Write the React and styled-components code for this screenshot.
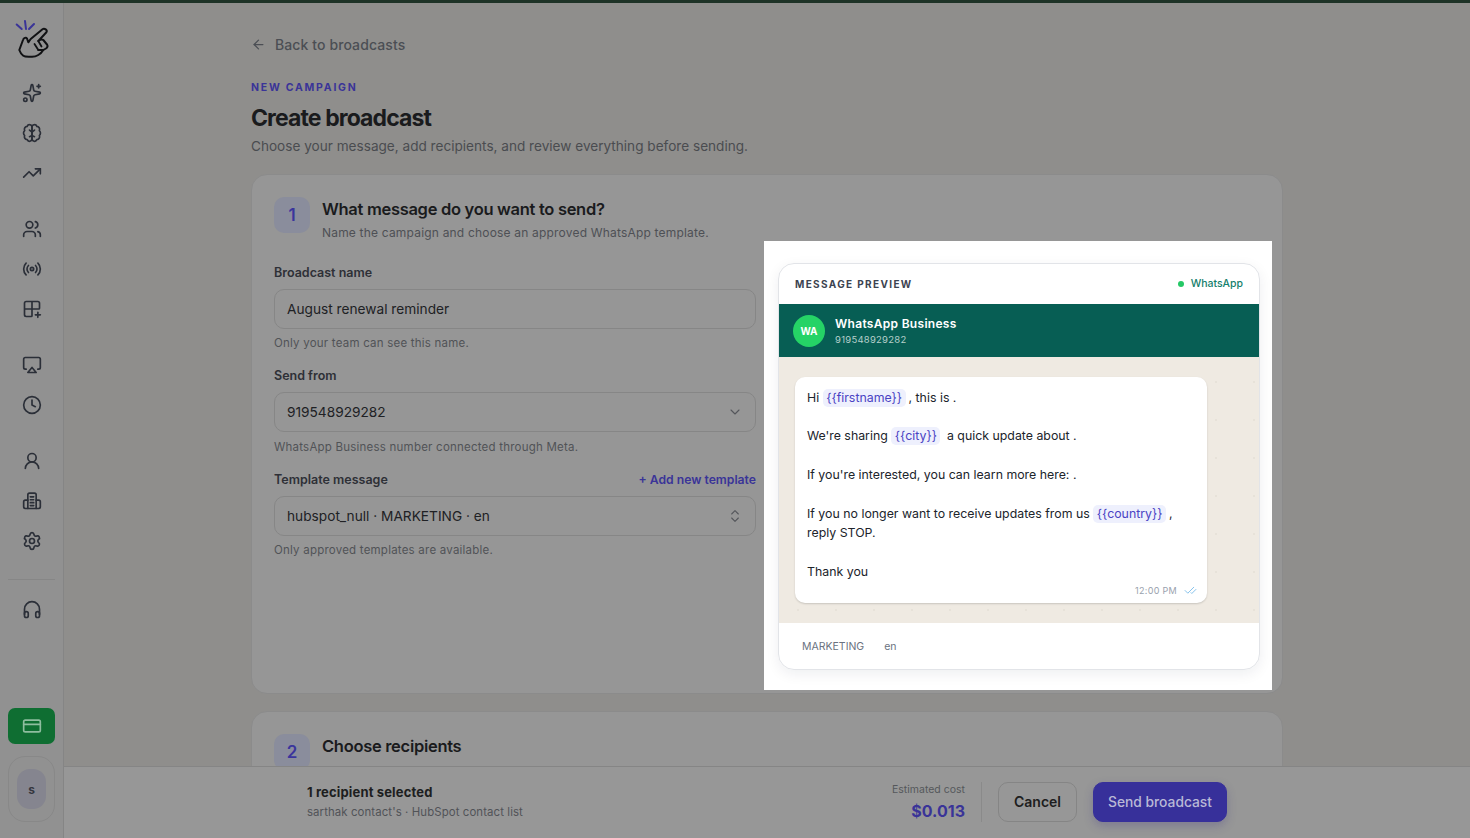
import React from 'react';
import styled, { createGlobalStyle } from 'styled-components';
import {
  Sparkles, TrendingUp, Users, Radio, Grid2x2Plus, Airplay, Clock, UserRound,
  Settings, CreditCard, ArrowLeft, ChevronDown, ChevronsUpDown, CheckCheck,
} from 'lucide-react';

const GlobalStyle = createGlobalStyle`
  html, body { margin: 0; padding: 0; height: 100%; background: #8f8e8c; }
  * { box-sizing: border-box; }
  body { font-family: Inter, "Noto Sans", sans-serif; color: #1d1e20; overflow: hidden; }
`;

const Shell = styled.div`
  display: flex;
  height: 838px;
  border-top: 3px solid #1e3327;
  position: relative;
  overflow: hidden;
`;

const Sidebar = styled.aside`
  width: 64px;
  flex-shrink: 0;
  background: #919191;
  border-right: 1px solid #858585;
  display: flex;
  flex-direction: column;
  align-items: center;
`;

const LogoWrap = styled.div`
  height: 70px;
  display: flex;
  align-items: center;
  justify-content: center;
  color: #17181a;
`;

const NavGroup = styled.div`
  display: flex;
  flex-direction: column;
  margin-bottom: 16px;
`;

const NavItem = styled.div`
  width: 40px;
  height: 40px;
  display: flex;
  align-items: center;
  justify-content: center;
  color: #2b2f38;
`;

const NavDivider = styled.div`
  width: 47px;
  height: 1px;
  background: #868686;
  margin: 2px 0 10px;
`;

const BillingButton = styled.div`
  margin-top: auto;
  width: 47px;
  height: 36px;
  border-radius: 7px;
  background: #0f6e32;
  color: #8fbd9f;
  display: flex;
  align-items: center;
  justify-content: center;
`;

const AvatarBox = styled.div`
  width: 47px;
  height: 66px;
  margin: 12px 0 16px;
  border: 1px solid #888888;
  border-radius: 17px;
  display: flex;
  align-items: center;
  justify-content: center;
`;

const Avatar = styled.div`
  width: 29px;
  height: 40px;
  border-radius: 13px;
  background: #85858f;
  color: #35373f;
  font-size: 12px;
  font-weight: 700;
  display: flex;
  align-items: center;
  justify-content: center;
`;

const Main = styled.main`
  flex: 1;
  padding-top: 32px;
  display: flex;
  flex-direction: column;
  align-items: center;
  overflow: hidden;
`;

const Column = styled.div`
  width: 1032px;
  flex-shrink: 0;
`;

const BackLink = styled.div`
  display: flex;
  align-items: center;
  gap: 9px;
  height: 18px;
  font-size: 14px;
  font-weight: 500;
  color: #4b4e54;
  margin-bottom: 28px;
  letter-spacing: 0.1px;
`;

const Eyebrow = styled.div`
  font-size: 10.5px;
  font-weight: 700;
  letter-spacing: 1.75px;
  color: #3a3498;
  line-height: 14px;
  margin-bottom: 7px;
`;

const PageTitle = styled.h1`
  margin: 0;
  font-size: 23px;
  line-height: 32px;
  font-weight: 700;
  letter-spacing: -0.9px;
  color: #1a1b1d;
`;

const PageSub = styled.p`
  margin: 2px 0 18px;
  font-size: 13.6px;
  line-height: 20px;
  color: #4a4c50;
`;

const Card = styled.section`
  position: relative;
  background: #969696;
  border: 1px solid #8b8b8b;
  border-radius: 16px;
  padding: 22px 22px;
  height: ${p => p.$height}px;
  margin-bottom: 17px;
`;

const StepHead = styled.div`
  display: flex;
  gap: 12px;
  margin-bottom: 21px;
`;

const StepBadge = styled.div`
  width: 36px;
  height: 36px;
  border-radius: 10px;
  background: #8a8d9c;
  color: #3a359c;
  font-size: 17px;
  font-weight: 600;
  display: flex;
  align-items: center;
  justify-content: center;
`;

const StepTitle = styled.h2`
  margin: -1px 0 0;
  font-size: 16.5px;
  line-height: 26px;
  font-weight: 600;
  letter-spacing: -0.3px;
  color: #1a1b1d;
`;

const StepSub = styled.p`
  margin: 2px 0 0;
  font-size: 12px;
  line-height: 18px;
  letter-spacing: 0.19px;
  color: #4e5055;
`;

const Form = styled.div`
  width: 482px;
`;

const Field = styled.div`
  margin-bottom: 15.5px;
`;

const LabelRow = styled.div`
  display: flex;
  justify-content: space-between;
  align-items: center;
  height: 18px;
  margin-bottom: 7.5px;
`;

const Label = styled.span`
  font-size: 12.5px;
  font-weight: 600;
  color: #2e3036;
`;

const AddLink = styled.span`
  font-size: 12.2px;
  font-weight: 600;
  color: #3a3498;
`;

const Control = styled.div`
  height: 40px;
  border: 1px solid #868686;
  border-radius: 10px;
  padding: 0 12px;
  display: flex;
  align-items: center;
  justify-content: space-between;
  font-size: 13.7px;
  color: #202124;
  svg { color: #54565b; }
`;

const Hint = styled.div`
  margin-top: 6.5px;
  font-size: 11.5px;
  line-height: 16px;
  letter-spacing: 0.22px;
  color: #515357;
`;

const Spotlight = styled.div`
  position: absolute;
  left: 512px;
  top: 66px;
  width: 508px;
  height: 449px;
  background: #fff;
  padding: 22px 12px 20px 14px;
`;

const PreviewCard = styled.div`
  height: 100%;
  border: 1px solid #e2e4e8;
  border-radius: 16px;
  overflow: hidden;
  display: flex;
  flex-direction: column;
  box-shadow: 0 4px 14px rgba(20, 30, 50, 0.07);
`;

const PreviewTop = styled.div`
  height: 40px;
  flex-shrink: 0;
  padding: 0 16px 1px;
  display: flex;
  align-items: center;
  justify-content: space-between;
`;

const PreviewLabel = styled.span`
  font-size: 10px;
  font-weight: 700;
  letter-spacing: 1.36px;
  color: #3c4350;
`;

const ChannelTag = styled.span`
  display: flex;
  align-items: center;
  gap: 7px;
  font-size: 10.5px;
  font-weight: 500;
  color: #15806c;
  &::before {
    content: '';
    width: 6px;
    height: 6px;
    border-radius: 50%;
    background: #25c866;
  }
`;

const WaBar = styled.div`
  height: 53px;
  flex-shrink: 0;
  background: #075e54;
  padding: 1px 14px 0;
  display: flex;
  align-items: center;
  gap: 10px;
`;

const WaAvatar = styled.div`
  width: 32px;
  height: 32px;
  border-radius: 50%;
  background: #25d366;
  color: #fff;
  font-size: 10px;
  font-weight: 700;
  display: flex;
  align-items: center;
  justify-content: center;
`;

const WaName = styled.div`
  font-size: 12px;
  line-height: 16px;
  font-weight: 600;
  letter-spacing: 0.3px;
  color: #fff;
`;

const WaNumber = styled.div`
  margin-top: 1px;
  font-size: 9.5px;
  line-height: 13px;
  letter-spacing: 0.25px;
  color: #b5cfca;
`;

const ChatArea = styled.div`
  flex: 1;
  background-color: #efeae2;
  background-image: radial-gradient(circle, #e7e2d9 1px, transparent 1.2px);
  background-size: 38px 38px;
  background-position: 0 6px;
  padding: 20px 52px 20px 16px;
`;

const Bubble = styled.div`
  height: 226px;
  background: #fff;
  border-radius: 10px;
  padding: 10.5px 12px;
  position: relative;
  box-shadow: 0 1px 2px rgba(0, 0, 0, 0.16);
  font-size: 12.35px;
  line-height: 19.4px;
  color: #20242b;
`;

const MsgLine = styled.div`
  min-height: 19.4px;
`;

const Token = styled.span`
  display: inline-block;
  line-height: 18px;
  margin: 0 3px 0 0;
  padding: 0 3.5px;
  border-radius: 5px;
  background: #eef0fd;
  color: #4a43c4;
`;

const Stamp = styled.div`
  position: absolute;
  right: 10px;
  bottom: 3px;
  display: flex;
  align-items: center;
  gap: 7px;
  font-size: 9px;
  letter-spacing: 0.3px;
  color: #99a1ad;
  svg { color: #62b0e6; }
`;

const PreviewFoot = styled.div`
  height: 47px;
  flex-shrink: 0;
  padding: 0 23px;
  display: flex;
  align-items: center;
  gap: 20px;
  font-size: 10.5px;
  color: #6a7280;
`;

const BottomBar = styled.div`
  position: absolute;
  left: 64px;
  right: 0;
  bottom: 0;
  height: 72px;
  background: #979797;
  border-top: 1px solid #858585;
  display: flex;
  justify-content: center;
`;

const BarInner = styled.div`
  width: 1032px;
  padding: 0 56px 2px;
  display: flex;
  align-items: center;
  justify-content: space-between;
`;

const BarTitle = styled.div`
  font-size: 13px;
  line-height: 18px;
  font-weight: 700;
  letter-spacing: 0.15px;
  color: #1d1e20;
`;

const BarSub = styled.div`
  margin-top: 3px;
  font-size: 11.4px;
  line-height: 16px;
  letter-spacing: 0.1px;
  color: #515357;
`;

const BarRight = styled.div`
  display: flex;
  align-items: center;
  gap: 16px;
`;

const Cost = styled.div`
  height: 40px;
  padding: 1px 16px 0 0;
  border-right: 1px solid #8a8a8a;
  text-align: right;
`;

const CostLabel = styled.div`
  font-size: 10.5px;
  line-height: 14px;
  color: #55575b;
`;

const CostValue = styled.div`
  margin-top: 3px;
  font-size: 16px;
  line-height: 22px;
  font-weight: 700;
  color: #3a3498;
`;

const Button = styled.button`
  height: 40px;
  width: ${p => p.$width}px;
  border-radius: 10px;
  border: 1px solid ${p => (p.$primary ? '#37309a' : '#858585')};
  background: ${p => (p.$primary ? '#37309a' : 'transparent')};
  color: ${p => (p.$primary ? '#b9b8d6' : '#1d1e20')};
  box-shadow: ${p => (p.$primary ? '0 4px 10px rgba(50, 45, 130, 0.25)' : 'none')};
  font-family: inherit;
  font-size: ${p => (p.$primary ? 13.8 : 14)}px;
  font-weight: ${p => (p.$primary ? 500 : 600)};
`;

const Logo = () => (
  <svg width="36" height="40" viewBox="0 0 36 40" fill="none" strokeLinecap="round" strokeLinejoin="round">
    <path d="M2.7 6.500 7.700 11M11 3l1 8M20 6l-5 5" stroke="#3a3498" strokeWidth="2" />
    <path
      d="M5.300 32 9 22C9.600 20 12 19 13 20.500L14.300 24.300 16.700 21 28.500 11.200C30.500 9.800 33.800 12 32.400 14.200L24.300 23 C26 21.800 28 21 29.300 22L33 26.500C34 28 33.500 29.500 32 30.500L29.300 32 C27.500 35 26 36 24.300 37 C21.500 38.800 18 39 16 38.700 C13 38.800 10.500 38.600 9.300 37.700 C7.300 36.200 6 34 5.300 32Z"
      stroke="#111214"
      strokeWidth="2"
    />
    <path d="M24.300 23 27.500 28.500M20.500 26 24 31.500M24 32l5.300 0" stroke="#111214" strokeWidth="1.800" />
  </svg>
);

const BrainIcon = ({ size = 20 }) => (
  <svg width={size} height={size} viewBox="0 0 24 24" fill="none" stroke="currentColor" strokeWidth="2" strokeLinecap="round" strokeLinejoin="round">
    <path d="M12 5a3 3 0 0 0-5.800-1 3.500 3.500 0 0 0-3 5 4 4 0 0 0 0 6 3.500 3.500 0 0 0 3 5 3 3 0 0 0 5.800-1Z" />
    <path d="M12 5a3 3 0 0 1 5.800-1 3.500 3.500 0 0 1 3 5 4 4 0 0 1 0 6 3.500 3.500 0 0 1-3 5 3 3 0 0 1-5.800-1Z" />
    <path d="M12 11 9 8.500M12 11l3-2.500M12 15l-3 1.500M12 15l3 1.500" />
  </svg>
);

const BuildingIcon = ({ size = 20 }) => (
  <svg width={size} height={size} viewBox="0 0 24 24" fill="none" stroke="currentColor" strokeWidth="2" strokeLinecap="round" strokeLinejoin="round">
    <path d="M7 21V4.500a2 2 0 0 1 2-2h6a2 2 0 0 1 2 2V21" />
    <path d="M7 11H4a2 2 0 0 0-2 2v6a2 2 0 0 0 2 2h16a2 2 0 0 0 2-2v-6a2 2 0 0 0-2-2h-3" />
    <path d="M10 7h4M10 10.500h4M10 14h4M10 17.500h4" />
  </svg>
);

const HeadphonesIcon = ({ size = 20 }) => (
  <svg width={size} height={size} viewBox="0 0 24 24" fill="none" stroke="currentColor" strokeWidth="2" strokeLinecap="round" strokeLinejoin="round">
    <path d="M3 17v-6a9 9 0 0 1 18 0v6" />
    <rect x="3" y="14" width="4.500" height="7" rx="2.200" />
    <rect x="16.500" y="14" width="4.500" height="7" rx="2.200" />
  </svg>
);

const navGroups = [
  [Sparkles, BrainIcon, TrendingUp],
  [Users, Radio, Grid2x2Plus],
  [Airplay, Clock],
  [UserRound, BuildingIcon, Settings],
];

const fields = [
  { label: 'Broadcast name', value: 'August renewal reminder', hint: 'Only your team can see this name.' },
  { label: 'Send from', value: '919548929282', hint: 'WhatsApp Business number connected through Meta.', icon: ChevronDown },
  { label: 'Template message', value: 'hubspot_null · MARKETING · en', hint: 'Only approved templates are available.', icon: ChevronsUpDown, link: '+ Add new template' },
];

export default function App() {
  return (
    <>
      <GlobalStyle />
      <Shell>
        <Sidebar>
          <LogoWrap><Logo /></LogoWrap>
          {navGroups.map((group, i) => (
            <NavGroup key={i}>
              {group.map((Icon, j) => (
                <NavItem key={j}><Icon size={20} strokeWidth={2} /></NavItem>
              ))}
            </NavGroup>
          ))}
          <NavDivider />
          <NavItem><HeadphonesIcon size={20} /></NavItem>
          <BillingButton><CreditCard size={20} strokeWidth={2} /></BillingButton>
          <AvatarBox><Avatar>s</Avatar></AvatarBox>
        </Sidebar>

        <Main>
          <Column>
            <BackLink><ArrowLeft size={15} strokeWidth={2} />Back to broadcasts</BackLink>
            <Eyebrow>NEW CAMPAIGN</Eyebrow>
            <PageTitle>Create broadcast</PageTitle>
            <PageSub>Choose your message, add recipients, and review everything before sending.</PageSub>

            <Card $height={520}>
              <StepHead>
                <StepBadge>1</StepBadge>
                <div>
                  <StepTitle>What message do you want to send?</StepTitle>
                  <StepSub>Name the campaign and choose an approved WhatsApp template.</StepSub>
                </div>
              </StepHead>
              <Form>
                {fields.map(f => (
                  <Field key={f.label}>
                    <LabelRow>
                      <Label>{f.label}</Label>
                      {f.link && <AddLink>{f.link}</AddLink>}
                    </LabelRow>
                    <Control>
                      {f.value}
                      {f.icon && <f.icon size={16} strokeWidth={1.6} />}
                    </Control>
                    <Hint>{f.hint}</Hint>
                  </Field>
                ))}
              </Form>

              <Spotlight>
                <PreviewCard>
                  <PreviewTop>
                    <PreviewLabel>MESSAGE PREVIEW</PreviewLabel>
                    <ChannelTag>WhatsApp</ChannelTag>
                  </PreviewTop>
                  <WaBar>
                    <WaAvatar>WA</WaAvatar>
                    <div>
                      <WaName>WhatsApp Business</WaName>
                      <WaNumber>919548929282</WaNumber>
                    </div>
                  </WaBar>
                  <ChatArea>
                    <Bubble>
                      <MsgLine>Hi <Token>{'{{firstname}}'}</Token>, this is .</MsgLine>
                      <MsgLine />
                      <MsgLine>We're sharing <Token>{'{{city}}'}</Token> a quick update about .</MsgLine>
                      <MsgLine />
                      <MsgLine>If you're interested, you can learn more here: .</MsgLine>
                      <MsgLine />
                      <MsgLine>If you no longer want to receive updates from us <Token>{'{{country}}'}</Token>,</MsgLine>
                      <MsgLine>reply STOP.</MsgLine>
                      <MsgLine />
                      <MsgLine>Thank you</MsgLine>
                      <Stamp>12:00 PM <CheckCheck size={13} strokeWidth={1.4} /></Stamp>
                    </Bubble>
                  </ChatArea>
                  <PreviewFoot>
                    <span>MARKETING</span>
                    <span>en</span>
                  </PreviewFoot>
                </PreviewCard>
              </Spotlight>
            </Card>

            <Card $height={200}>
              <StepHead>
                <StepBadge>2</StepBadge>
                <StepTitle>Choose recipients</StepTitle>
              </StepHead>
            </Card>
          </Column>
        </Main>

        <BottomBar>
          <BarInner>
            <div>
              <BarTitle>1 recipient selected</BarTitle>
              <BarSub>sarthak contact's · HubSpot contact list</BarSub>
            </div>
            <BarRight>
              <Cost>
                <CostLabel>Estimated cost</CostLabel>
                <CostValue>$0.013</CostValue>
              </Cost>
              <Button $width={79}>Cancel</Button>
              <Button $width={134} $primary>Send broadcast</Button>
            </BarRight>
          </BarInner>
        </BottomBar>
      </Shell>
    </>
  );
}
